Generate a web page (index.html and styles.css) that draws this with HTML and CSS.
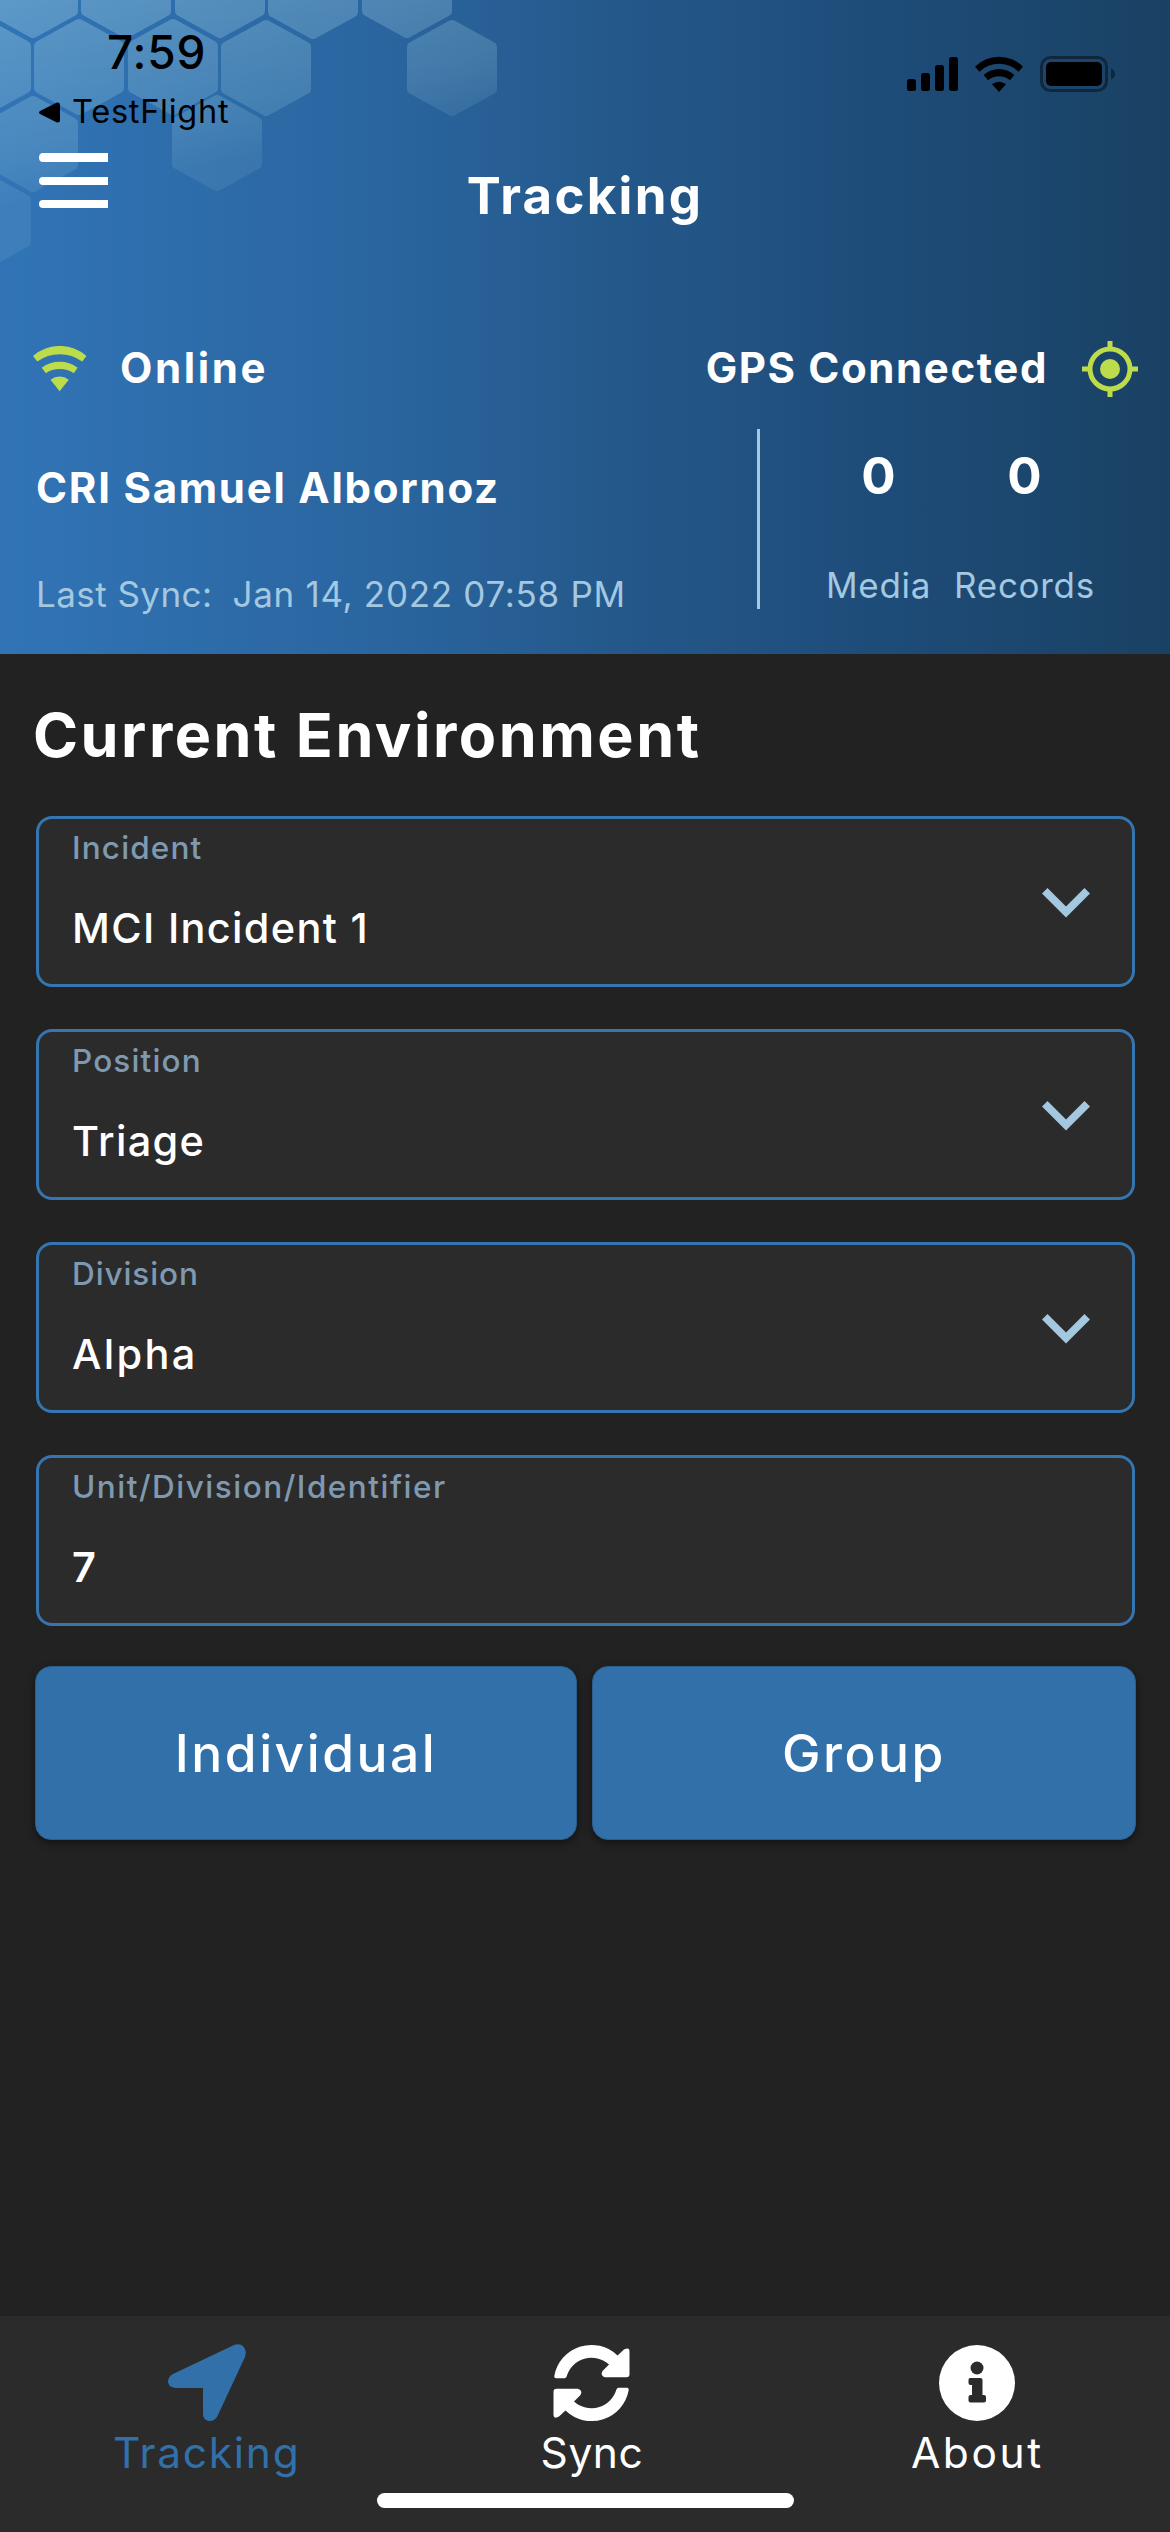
FILE: index.html
```html
<!DOCTYPE html>
<html lang="en">
<head>
<meta charset="utf-8">
<title>Tracking</title>
<link rel="stylesheet" href="styles.css">
</head>
<body>
<div class="screen">
  <header class="header">
    <svg class="hexes" width="520" height="280" viewBox="0 0 520 280" aria-hidden="true">
      <defs>
        <linearGradient id="fade" gradientUnits="userSpaceOnUse" x1="0" y1="0" x2="40" y2="200">
          <stop offset="0" stop-color="#fff" stop-opacity=".36"/>
          <stop offset=".35" stop-color="#fff" stop-opacity=".28"/>
          <stop offset=".75" stop-color="#fff" stop-opacity=".2"/>
          <stop offset="1" stop-color="#fff" stop-opacity=".11"/>
        </linearGradient>
        <polygon id="hex" points="0,-43 40,-21 40,21 0,43 -40,21 -40,-21" stroke-width="10" stroke-linejoin="round"/>
        <mask id="cells" maskUnits="userSpaceOnUse" x="0" y="0" width="520" height="280">
          <g fill="#fff" stroke="#fff">
            <use href="#hex" x="33" y="-10"/><use href="#hex" x="126" y="-10"/><use href="#hex" x="220" y="-10"/>
            <use href="#hex" x="313" y="-9"/><use href="#hex" x="407" y="-10"/>
            <use href="#hex" x="-14" y="67"/><use href="#hex" x="79" y="67"/><use href="#hex" x="173" y="67"/>
            <use href="#hex" x="266" y="68"/><use href="#hex" x="452" y="68"/>
            <use href="#hex" x="33" y="144"/><use href="#hex" x="217" y="143"/>
            <use href="#hex" x="-14" y="221"/>
          </g>
        </mask>
        <mask id="fadeMask" maskUnits="userSpaceOnUse" x="0" y="0" width="520" height="280">
          <rect width="520" height="280" fill="url(#fade)"/>
        </mask>
      </defs>
      <g mask="url(#cells)">
        <rect width="520" height="280" fill="#acdce8" mask="url(#fadeMask)"/>
      </g>
    </svg>

    <div class="statusbar">
      <div class="clock">
        <div class="time">7:59</div>
        <div class="back">
          <svg width="21" height="21" viewBox="0 0 21 21"><path d="M1 9 18 .6Q21 0 21 3V18Q21 21 18 20.400L1 12Q-1 10.500 1 9Z"/></svg>
          <span>TestFlight</span>
        </div>
      </div>
      <div class="indicators">
        <svg width="51" height="34" viewBox="0 0 51 34"><rect y="22" width="9" height="12" rx="2.500"/><rect x="14" y="16" width="9" height="18" rx="2.500"/><rect x="28" y="8" width="9" height="26" rx="2.500"/><rect x="42" width="9" height="34" rx="2.500"/></svg>
        <svg width="48" height="36" viewBox="0 0 48 36"><path d="M0 10.700A34 34 0 0 1 48 10.700L43.500 15.700A28 28 0 0 0 4.500 15.700ZM8.600 19A22.500 22.500 0 0 1 39.400 19L35 24.300A17 17 0 0 0 13 24.300ZM17 28.300A10.500 10.500 0 0 1 31 28.300L24 36Z"/></svg>
        <svg width="76" height="36" viewBox="0 0 76 36"><rect x="1.500" y="1.500" width="65" height="33" rx="9" fill="none" stroke="#000" stroke-opacity=".42" stroke-width="3"/><rect x="6" y="6" width="56" height="24" rx="5"/><path d="M71 12.500Q75 14.500 75 18T71 23.500Z" fill-opacity=".42"/></svg>
      </div>
    </div>

    <div class="titlebar">
      <svg class="menu" width="69" height="56" viewBox="0 0 69 56"><path d="M4 0H69V9H4Q0 9 0 4.500T4 0ZM4 24H69V32H4Q0 32 0 28T4 24ZM4 47H69V55H4Q0 55 0 51T4 47Z"/></svg>
      <h1 class="title">Tracking</h1>
    </div>

    <div class="connection">
      <svg class="lime" width="54" height="46" viewBox="0 0 54 46"><path d="M0 10A40.600 40.600 0 0 1 53.500 10L49.200 15.500A38 38 0 0 0 4.300 15.500ZM8.700 21.700A30 30 0 0 1 44.600 21.700L40.800 27.300A25.500 25.500 0 0 0 12.800 27.300ZM17.500 33.700A15 15 0 0 1 35.800 33.700L26.600 45.300Z"/></svg>
      <span class="online">Online</span>
      <span class="gps">GPS Connected</span>
      <svg class="lime" width="56" height="56" viewBox="0 0 56 56"><circle cx="28" cy="28" r="20" fill="none" stroke="#bcdc4b" stroke-width="5"/><circle cx="28" cy="28" r="10"/><path d="M25.500 0h5v8h-5zM25.500 48h5v8h-5zM0 25.500h8v5H0zM48 25.500h8v5h-8z"/></svg>
    </div>

    <div class="account">
      <div class="who">
        <div class="name">CRI Samuel Albornoz</div>
        <div class="sync"><span>Last Sync:</span><span class="date">Jan 14, 2022 07:58 PM</span></div>
      </div>
      <div class="stats">
        <div class="stat"><div class="count">0</div><div class="unit">Media</div></div>
        <div class="stat"><div class="count">0</div><div class="unit">Records</div></div>
      </div>
    </div>
  </header>

  <main class="content">
    <h2 class="heading">Current Environment</h2>
    <div class="fields">
      <div class="field">
        <div class="text"><div class="label">Incident</div><div class="value">MCI Incident 1</div></div>
        <svg class="chevron" width="48" height="30" viewBox="0 0 48 30"><path d="M5.500 0 24 18.500 42.500 0 48 5.500 24 29.500 0 5.500Z"/></svg>
      </div>
      <div class="field">
        <div class="text"><div class="label">Position</div><div class="value">Triage</div></div>
        <svg class="chevron" width="48" height="30" viewBox="0 0 48 30"><path d="M5.500 0 24 18.500 42.500 0 48 5.500 24 29.500 0 5.500Z"/></svg>
      </div>
      <div class="field">
        <div class="text"><div class="label label-tight">Division</div><div class="value value-wide">Alpha</div></div>
        <svg class="chevron" width="48" height="30" viewBox="0 0 48 30"><path d="M5.500 0 24 18.500 42.500 0 48 5.500 24 29.500 0 5.500Z"/></svg>
      </div>
      <div class="field">
        <div class="text"><div class="label label-long">Unit/Division/Identifier</div><div class="value value-number">7</div></div>
      </div>
    </div>
    <div class="actions">
      <button class="action">Individual</button>
      <button class="action">Group</button>
    </div>
  </main>

  <nav class="nav">
    <div class="tabs">
      <div class="tab tab-active">
        <svg width="78" height="78" viewBox="0 0 78 78"><path d="M6 29.500 66 1C73-2 80 4 77 13L49.500 72C46 79.500 35 78.500 35 70V44H8C-1.500 44-3 33.500 6 29.500Z"/></svg>
        <span class="tab-label">Tracking</span>
      </div>
      <div class="tab">
        <svg width="77" height="78" viewBox="0 -1 77 78"><g id="half"><path d="M1.300 31A37.600 37.600 0 0 1 64.500 10.500L71 4.500Q76.500 1.500 76.500 6.500V29Q76.500 32.300 73.500 32.300H52Q47 30.500 49.500 26L56 19.500A26 26 0 0 0 13.600 31.500Q13 33.200 11.500 33.200H3Q1 33.200 1.300 31Z"/></g><use href="#half" transform="rotate(180 38.500 38)"/></svg>
        <span class="tab-label tab-label-tight">Sync</span>
      </div>
      <div class="tab">
        <svg width="76" height="78" viewBox="0 -1 76 78"><circle cx="38" cy="38" r="38"/><g fill="#2b2b2b"><circle cx="38" cy="23" r="6.500"/><path d="M31 33H41.500Q43.500 33 43.500 35V50H45Q47 50 47 52V55.500Q47 57.500 45 57.500H31.500Q29.500 57.500 29.500 55.500V52Q29.500 50 31.500 50H33V40H31.500Q29.500 40 29.500 38V35Q29.500 33 31 33Z"/></g></svg>
        <span class="tab-label tab-label-wide">About</span>
      </div>
    </div>
    <div class="home-indicator"></div>
  </nav>
</div>
</body>
</html>
```

FILE: styles.css
```css
* { box-sizing: border-box; }

body {
  margin: 0;
  background: #222;
  color: #fff;
  font-family: Inter, "Open Sans", sans-serif;
}

h1, h2 { margin: 0; }
svg { display: block; flex: none; }

.screen {
  display: flex;
  flex-direction: column;
  width: 1170px;
  height: 2532px;
  overflow: hidden;
}

/* Header */
.header {
  position: relative;
  height: 654px;
  background: linear-gradient(90deg, #3174b6 0%, #2a659f 33%, #24588a 53%, #1e4c79 75%, #194163 100%);
}
.hexes { position: absolute; left: 0; top: 0; }

.statusbar {
  position: relative;
  display: flex;
  justify-content: space-between;
  height: 134px;
  padding: 24px 54px 0 39px;
  color: #000;
}
.time {
  margin-left: 68px;
  font-size: 46px;
  font-weight: 500;
  line-height: 56px;
  letter-spacing: .8px;
}
.back {
  display: flex;
  align-items: center;
  gap: 12px;
  margin-top: 12px;
  font-size: 32.5px;
  font-weight: 400;
  line-height: 40px;
  letter-spacing: .75px;
}
.indicators {
  display: flex;
  align-items: flex-end;
  gap: 17px;
  height: 68px;
}
.indicators svg:first-child { margin-bottom: 1px; }

.titlebar {
  position: relative;
  display: flex;
  align-items: flex-start;
  height: 207px;
  padding: 19px 108px 0 39px;
}
.menu { fill: #fff; }
.title {
  flex: 1;
  margin-top: 13px;
  text-align: center;
  font-size: 51px;
  font-weight: 700;
  line-height: 60px;
  letter-spacing: 2.3px;
}

.connection {
  display: flex;
  align-items: center;
  height: 56px;
  padding: 0 32px 0 33px;
  font-size: 42px;
  font-weight: 700;
  line-height: 50px;
}
.lime { fill: #bcdc4b; }
.online {
  margin-left: 33px;
  padding-bottom: 2px;
  letter-spacing: 2.6px;
}
.gps {
  margin: 0 34px 0 auto;
  padding-bottom: 2px;
  letter-spacing: 1.6px;
}

.account {
  display: flex;
  height: 180px;
  margin-top: 32px;
}
.who {
  width: 757px;
  padding: 34px 0 0 36px;
}
.name {
  font-size: 42px;
  font-weight: 700;
  line-height: 50px;
  letter-spacing: 1.75px;
}
.sync {
  display: flex;
  margin-top: 59px;
  color: #a3c8e0;
  font-size: 35px;
  line-height: 44px;
  letter-spacing: .44px;
}
.date {
  margin-left: 20px;
  letter-spacing: .7px;
}
.stats {
  display: flex;
  gap: 23px;
  padding: 17px 0 0 66px;
  border-left: 3px solid #a3c8e0;
  text-align: center;
}
.count {
  font-size: 51px;
  font-weight: 700;
  line-height: 60px;
}
.unit {
  margin-top: 57px;
  color: #a3c8e0;
  font-size: 35px;
  line-height: 44px;
  letter-spacing: .7px;
}

/* Environment form */
.content { padding: 45px 34px 0 35px; }
.heading {
  margin-left: -2px;
  font-size: 61px;
  font-weight: 700;
  line-height: 72px;
  letter-spacing: 2.5px;
}
.fields {
  display: flex;
  flex-direction: column;
  gap: 42px;
  margin: 45px 1px 0;
}
.field {
  display: flex;
  align-items: center;
  justify-content: space-between;
  height: 171px;
  padding: 0 42px 0 33px;
  border: 3px solid #3575b0;
  border-radius: 16px;
  background: #2b2b2b;
}
.text {
  align-self: flex-start;
  padding-top: 10px;
}
.label {
  color: #7f99b0;
  font-size: 31.5px;
  font-weight: 500;
  line-height: 38px;
  letter-spacing: 1.15px;
}
.label-tight { letter-spacing: .9px; }
.label-long { letter-spacing: 1.5px; }
.value {
  margin-top: 36px;
  font-size: 41.5px;
  font-weight: 500;
  line-height: 50px;
  letter-spacing: 1.3px;
}
.value-wide { letter-spacing: 2.3px; }
.value-number { font-weight: 600; }
.chevron { margin-top: 2px; fill: #a3c8df; }

.actions {
  display: grid;
  grid-template-columns: 542px 544px;
  gap: 15px;
  margin-top: 40px;
}
.action {
  height: 174px;
  padding: 0;
  border: 1px solid #2a5f8d;
  border-radius: 16px;
  background: #3170a9;
  box-shadow: 0 3px 8px rgba(0, 0, 0, .45);
  color: #fff;
  font: 500 51.5px/60px Inter, sans-serif;
  letter-spacing: 2.5px;
}

/* Bottom navigation */
.nav {
  height: 216px;
  margin-top: auto;
  padding-top: 28px;
  background: #2b2b2b;
}
.tabs {
  display: grid;
  grid-template-columns: repeat(3, 1fr);
  padding-left: 14px;
}
.tab {
  display: flex;
  flex-direction: column;
  align-items: center;
  gap: 6px;
  fill: #fff;
}
.tab-active { color: #3170a9; fill: #3170a9; }
.tab-label {
  font-size: 42.5px;
  line-height: 50px;
  letter-spacing: 1.7px;
}
.tab-label-tight { letter-spacing: .6px; }
.tab-label-wide { letter-spacing: 2.6px; }
.home-indicator {
  width: 417px;
  height: 15px;
  margin: 15px 0 0 377px;
  border-radius: 8px;
  background: #fff;
}
```
